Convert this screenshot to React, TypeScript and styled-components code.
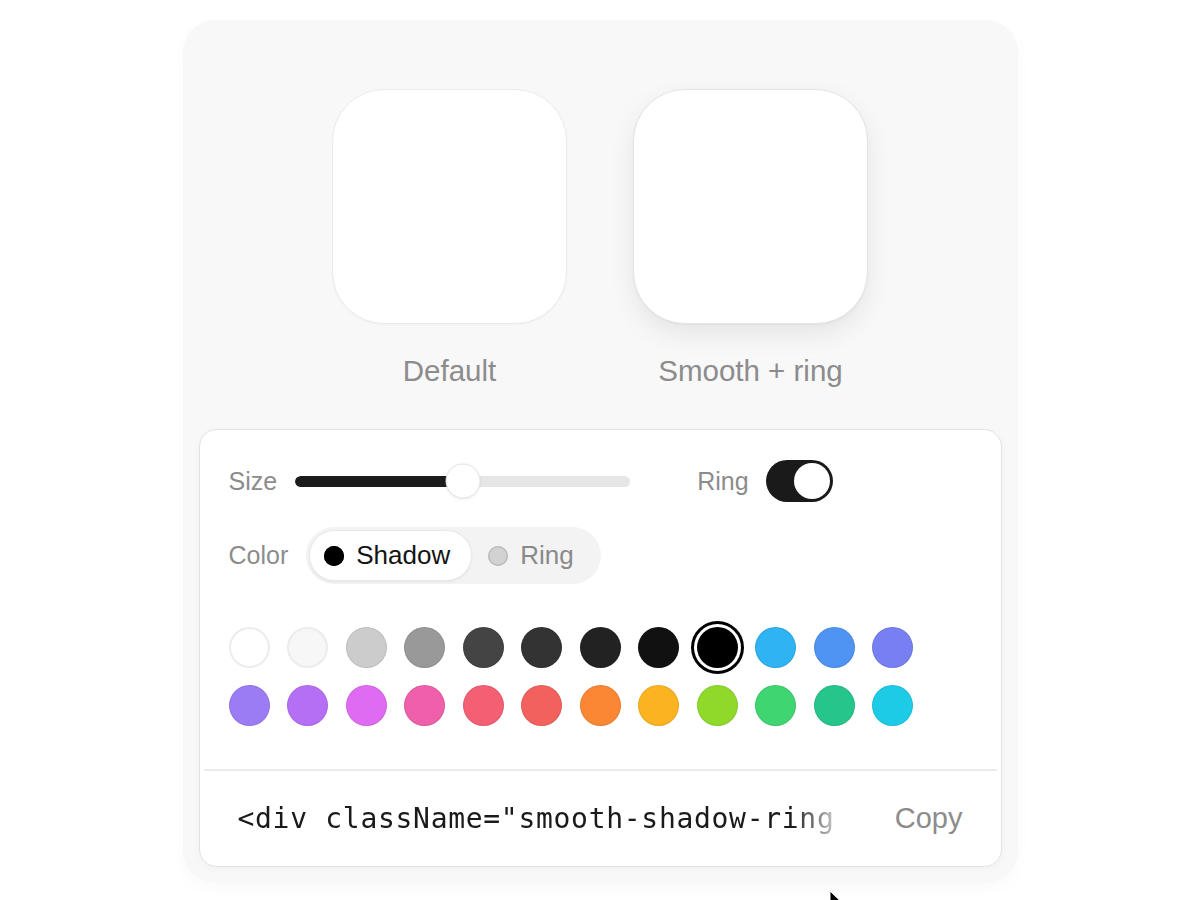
import React from 'react';
import styled, { createGlobalStyle } from 'styled-components';

const Global = createGlobalStyle`
  html, body { margin: 0; padding: 0; background: #ffffff; }
  body {
    font-family: "Liberation Sans", Arial, Helvetica, sans-serif;
    -webkit-font-smoothing: antialiased;
  }
  * { box-sizing: border-box; }
`;

const Page = styled.div`
  position: relative;
  width: 1200px;
  height: 900px;
  overflow: hidden;
  padding-top: 20px;
  display: flex;
  justify-content: center;
  align-items: flex-start;
`;

const Shell = styled.div`
  width: 835px;
  background: #f8f8f8;
  border-radius: 32px;
  padding: 69px 16px 16px;
  display: flex;
  flex-direction: column;
  box-shadow: 0 6px 18px rgba(0, 0, 0, 0.025);
`;

const Previews = styled.div`
  display: flex;
  justify-content: center;
  gap: 66px;
  margin-bottom: 41px;
`;

const PreviewItem = styled.div`
  display: flex;
  flex-direction: column;
  align-items: center;
  gap: 29px;
`;

const Tile = styled.div<{ $smooth?: boolean }>`
  width: 235px;
  height: 235px;
  border-radius: 52px;
  background: #ffffff;
  border: 1px solid ${p => (p.$smooth ? '#e4e4e4' : '#ebebeb')};
  box-shadow: ${p =>
    p.$smooth
      ? '0 1px 2px rgba(0,0,0,0.04), 0 10px 26px rgba(0,0,0,0.08)'
      : '0 1px 2px rgba(0,0,0,0.03)'};
`;

const TileLabel = styled.div`
  font-size: 29.5px;
  line-height: 35px;
  color: #8c8c8c;
`;

const Panel = styled.div`
  background: #ffffff;
  border: 1px solid #e3e3e3;
  border-radius: 18px;
  box-shadow: 0 2px 8px rgba(0, 0, 0, 0.03);
  display: flex;
  flex-direction: column;
`;

const Controls = styled.div`
  padding: 30px 30px 43px 29px;
  display: flex;
  flex-direction: column;
`;

const Row = styled.div<{ $mt?: number }>`
  display: flex;
  align-items: center;
  margin-top: ${p => p.$mt ?? 0}px;
`;

const Label = styled.span<{ $gap?: number }>`
  font-size: 25px;
  color: #8c8c8c;
  margin-right: ${p => p.$gap ?? 18}px;
`;

const Slider = styled.div`
  position: relative;
  width: 335px;
  height: 42px;
  display: flex;
  align-items: center;
  margin-right: 67px;
`;

const Track = styled.div`
  position: relative;
  width: 100%;
  height: 11px;
  border-radius: 6px;
  background: #e6e6e6;
  overflow: hidden;
`;

const Fill = styled.div`
  height: 100%;
  background: #1b1b1b;
  border-radius: 6px;
`;

const Thumb = styled.div`
  position: absolute;
  top: 50%;
  width: 35px;
  height: 35px;
  border-radius: 50%;
  background: #ffffff;
  border: 1px solid #e2e2e2;
  box-shadow: 0 1px 3px rgba(0, 0, 0, 0.08);
  transform: translate(-50%, -50%);
`;

const Toggle = styled.div<{ $on: boolean }>`
  width: 67px;
  height: 42px;
  border-radius: 21px;
  background: ${p => (p.$on ? '#1a1a1a' : '#e5e5e5')};
  padding: 3px;
  display: flex;
  justify-content: ${p => (p.$on ? 'flex-end' : 'flex-start')};
`;

const Knob = styled.div`
  width: 36px;
  height: 36px;
  border-radius: 50%;
  background: #ffffff;
`;

const Segmented = styled.div`
  display: flex;
  height: 57px;
  padding: 3px;
  border-radius: 29px;
  background: #f3f3f3;
`;

const Segment = styled.div<{ $active?: boolean }>`
  display: flex;
  align-items: center;
  gap: 12px;
  padding: 0 ${p => (p.$active ? 21 : 23)}px 0 ${p => (p.$active ? 14 : 15)}px;
  border-radius: 26px;
  background: ${p => (p.$active ? '#ffffff' : 'transparent')};
  border: 1px solid ${p => (p.$active ? '#e9e9e9' : 'transparent')};
  box-shadow: ${p => (p.$active ? '0 1px 3px rgba(0,0,0,0.06)' : 'none')};
  font-size: 26px;
  color: ${p => (p.$active ? '#141414' : '#8a8a8a')};
`;

const Dot = styled.span<{ $color: string; $edge: string }>`
  width: 20px;
  height: 20px;
  border-radius: 50%;
  background: ${p => p.$color};
  box-shadow: inset 0 0 0 1.5px ${p => p.$edge};
`;

const Swatches = styled.div`
  display: grid;
  grid-template-columns: repeat(12, 41px);
  column-gap: 17.5px;
  row-gap: 17px;
  margin-top: 43px;
`;

const Swatch = styled.div<{ $color: string; $selected?: boolean; $light?: boolean }>`
  width: 41px;
  height: 41px;
  border-radius: 50%;
  background: ${p => p.$color};
  box-shadow: ${p =>
    p.$selected
      ? '0 0 0 3px #ffffff, 0 0 0 6px #000000'
      : p.$light
      ? 'inset 0 0 0 2px #ececec'
      : 'inset 0 0 0 1px rgba(0,0,0,0.08)'};
`;

const Divider = styled.div`
  height: 2px;
  margin: 0 4px;
  background: #ebebeb;
`;

const CodeRow = styled.div`
  height: 95px;
  display: flex;
  align-items: center;
  padding: 0 38px 0 38px;
`;

const Code = styled.div`
  flex: 0 0 auto;
  white-space: nowrap;
  font-family: "DejaVu Sans Mono", "Liberation Mono", monospace;
  font-size: 28px;
  letter-spacing: 0.7px;
  color: #1a1a1a;
  -webkit-mask-image: linear-gradient(to right, #000 calc(100% - 42px), rgba(0,0,0,0.25));
  mask-image: linear-gradient(to right, #000 calc(100% - 42px), rgba(0,0,0,0.25));
`;

const CopyButton = styled.span`
  margin-left: auto;
  font-size: 29px;
  color: #8c8c8c;
`;

const Cursor = styled.svg`
  position: absolute;
  left: 829px;
  top: 890px;
`;

const row1 = ['#ffffff', '#f7f7f7', '#cccccc', '#999999', '#444444', '#333333', '#222222', '#111111', '#000000', '#2fb3f2', '#4f94f3', '#7680f3'];
const row2 = ['#9b7cf5', '#b56ff4', '#e06bf3', '#ef5faa', '#f45f74', '#f2615d', '#fb8734', '#fbb420', '#8fd92a', '#3fd570', '#26c58b', '#1ecbe6'];

export default function App() {
  const size = 50;
  return (
    <>
      <Global />
      <Page>
        <Shell>
          <Previews>
            <PreviewItem>
              <Tile />
              <TileLabel>Default</TileLabel>
            </PreviewItem>
            <PreviewItem>
              <Tile $smooth />
              <TileLabel>Smooth + ring</TileLabel>
            </PreviewItem>
          </Previews>
          <Panel>
            <Controls>
              <Row>
                <Label>Size</Label>
                <Slider>
                  <Track>
                    <Fill style={{ width: `${size}%` }} />
                  </Track>
                  <Thumb style={{ left: `${size}%` }} />
                </Slider>
                <Label $gap={17}>Ring</Label>
                <Toggle $on>
                  <Knob />
                </Toggle>
              </Row>
              <Row $mt={25}>
                <Label>Color</Label>
                <Segmented>
                  <Segment $active>
                    <Dot $color="#000000" $edge="#000000" />
                    Shadow
                  </Segment>
                  <Segment>
                    <Dot $color="#d2d2d2" $edge="#bdbdbd" />
                    Ring
                  </Segment>
                </Segmented>
              </Row>
              <Swatches>
                {row1.map((c, i) => (
                  <Swatch key={'a' + i} $color={c} $selected={i === 8} $light={i < 2} />
                ))}
                {row2.map((c, i) => (
                  <Swatch key={'b' + i} $color={c} />
                ))}
              </Swatches>
            </Controls>
            <Divider />
            <CodeRow>
              <Code>{'<div className="smooth-shadow-ring'}</Code>
              <CopyButton>Copy</CopyButton>
            </CodeRow>
          </Panel>
        </Shell>
        <Cursor width="14" height="20" viewBox="0 0 14 20">
          <path d="M1 1 L1 17 L5 13 L8 19.5 L10.5 18.5 L7.6 12 L12.5 12 Z" fill="#000" stroke="#fff" strokeWidth="1" />
        </Cursor>
      </Page>
    </>
  );
}
